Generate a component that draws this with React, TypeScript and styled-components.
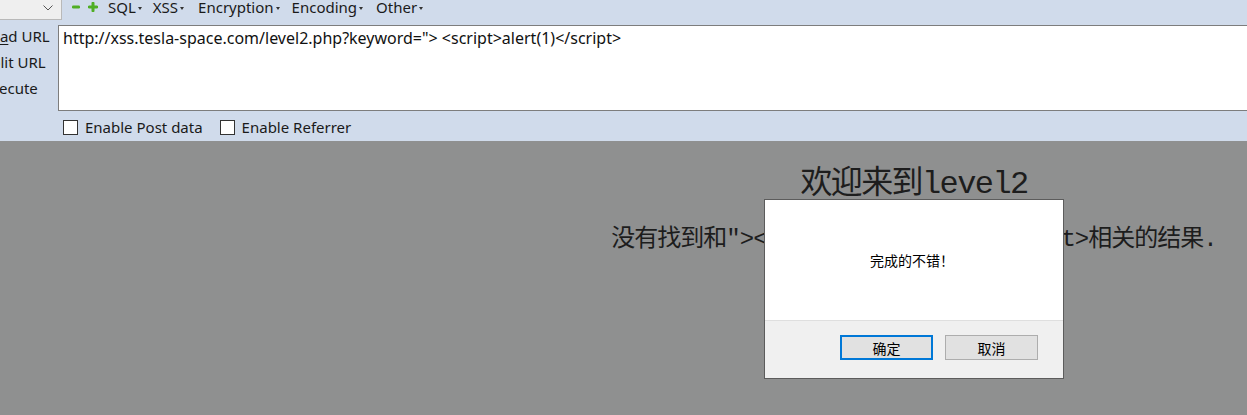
import React from "react";
import styled, { createGlobalStyle } from "styled-components";

const GlobalStyle = createGlobalStyle`
  html, body {
    margin: 0;
    padding: 0;
    width: 1247px;
    height: 415px;
    overflow: hidden;
    background: #8f9090;
  }
  * { box-sizing: border-box; }
`;

const Page = styled.div`
  position: relative;
  width: 1247px;
  height: 415px;
  overflow: hidden;
  background: #8f9090;
`;

const HackBar = styled.div`
  background: #d0dbeb;
  height: 141px;
  font-family: "Noto Sans", "Open Sans", sans-serif;
  font-size: 15px;
  color: #1a1a1a;
`;

const TopRow = styled.div`
  display: flex;
  align-items: flex-start;
  height: 25px;
`;

const Select = styled.div`
  width: 62px;
  height: 20px;
  background: #efefef;
  border-right: 1px solid #b9b9b9;
  border-bottom: 1px solid #b9b9b9;
  display: flex;
  justify-content: flex-end;
  align-items: flex-start;
  padding: 5px 8px 0 0;
`;

const IconBox = styled.span<{ $ml: number }>`
  display: inline-flex;
  width: 10px;
  height: 10px;
  margin-top: 2px;
  margin-left: ${(p) => p.$ml}px;
`;

const Menu = styled.span<{ $ml: number }>`
  display: inline-flex;
  align-items: center;
  margin-left: ${(p) => p.$ml}px;
  line-height: 15px;
  white-space: nowrap;
`;

const Caret = styled.span`
  display: inline-block;
  width: 0;
  height: 0;
  margin-left: 2px;
  margin-top: 1px;
  border-left: 2px solid transparent;
  border-right: 2px solid transparent;
  border-top: 3px solid #333;
`;

const Body = styled.div`
  display: flex;
  height: 86px;
`;

const Side = styled.div`
  display: flex;
  flex-direction: column;
  width: 75px;
  margin-left: -17px;
  margin-top: -2px;
  flex-shrink: 0;
`;

const SideButton = styled.div`
  height: 26px;
  line-height: 26px;
  white-space: nowrap;
  u { text-decoration: underline; text-underline-offset: 2px; }
`;

const UrlBox = styled.div`
  flex: 1;
  margin-right: -4px;
  background: #ffffff;
  border: 1px solid #7d7d7d;
  padding: 2px 4px;
  line-height: 20px;
  font-size: 16px;
  color: #111;
  white-space: nowrap;
`;

const Options = styled.div`
  display: flex;
  align-items: flex-start;
  padding: 8px 0 0 63px;
  height: 30px;
`;

const CheckItem = styled.label<{ $mr: number }>`
  display: inline-flex;
  align-items: center;
  margin-right: ${(p) => p.$mr}px;
  height: 16px;
  white-space: nowrap;
`;

const CheckBox = styled.span`
  width: 15px;
  height: 15px;
  border: 1px solid #333;
  background: #fff;
  margin-right: 7px;
`;

const Content = styled.div`
  width: 1828px;
  text-align: center;
  color: #1d1d1d;
  font-family: "Liberation Mono", "Noto Sans CJK SC", monospace;
`;

const Title = styled.h1`
  margin: 24px 0 0;
  font-size: 32px;
  line-height: 40px;
  font-weight: 400;
  letter-spacing: -1.6px;
`;

const Result = styled.h2`
  margin: 20px 0 0;
  font-size: 24px;
  line-height: 30px;
  font-weight: 400;
  letter-spacing: -1px;
`;

const Dialog = styled.div`
  position: absolute;
  left: 764px;
  top: 199px;
  width: 300px;
  height: 180px;
  border: 1px solid #5c5c5c;
  background: #ffffff;
  display: flex;
  flex-direction: column;
  font-family: "Noto Sans CJK SC", "Noto Sans", sans-serif;
  font-size: 14px;
  color: #000;
`;

const DialogBody = styled.div`
  height: 120px;
  display: flex;
  align-items: center;
  justify-content: center;
  padding-right: 4px;
`;

const DialogFooter = styled.div`
  flex: 1;
  background: #f0f0f0;
  border-top: 1px solid #dfdfdf;
  display: flex;
  justify-content: flex-end;
  align-items: flex-start;
  padding: 14px 25px 0 0;
  gap: 12px;
`;

const DlgButton = styled.div<{ $primary?: boolean }>`
  width: 93px;
  height: 25px;
  display: flex;
  align-items: center;
  justify-content: center;
  background: #e1e1e1;
  border: ${(p) => (p.$primary ? "2px solid #0078d7" : "1px solid #adadad")};
  font-size: 14px;
  line-height: 1;
`;

const Minus = () => (
  <svg width="10" height="10" viewBox="0 0 10 10">
    <rect x="1" y="3.5" width="8" height="3" rx="1.2" fill="#4fae25" />
  </svg>
);

const Plus = () => (
  <svg width="10" height="10" viewBox="0 0 10 10">
    <path d="M5 1.2 V8.8 M1.2 5 H8.8" stroke="#4fae25" strokeWidth="3" strokeLinecap="round" />
  </svg>
);

const Chevron = () => (
  <svg width="10" height="6" viewBox="0 0 10 6">
    <polyline points="0.5,0.5 5,5 9.5,0.5" fill="none" stroke="#555" strokeWidth="1" />
  </svg>
);

export default function App() {
  return (
    <Page>
      <GlobalStyle />
      <HackBar>
        <TopRow>
          <Select>
            <Chevron />
          </Select>
          <IconBox $ml={9}>
            <Minus />
          </IconBox>
          <IconBox $ml={7}>
            <Plus />
          </IconBox>
          <Menu $ml={10}>
            SQL<Caret />
          </Menu>
          <Menu $ml={11}>
            XSS<Caret />
          </Menu>
          <Menu $ml={14}>
            Encryption<Caret />
          </Menu>
          <Menu $ml={12}>
            Encoding<Caret />
          </Menu>
          <Menu $ml={13}>
            Other<Caret />
          </Menu>
        </TopRow>
        <Body>
          <Side>
            <SideButton>
              Lo<u>a</u>d URL
            </SideButton>
            <SideButton>Split URL</SideButton>
            <SideButton>Execute</SideButton>
          </Side>
          <UrlBox>
            http://xss.tesla-space.com/level2.php?keyword="&gt; &lt;script&gt;alert(1)&lt;/script&gt;
          </UrlBox>
        </Body>
        <Options>
          <CheckItem $mr={17}>
            <CheckBox />
            Enable Post data
          </CheckItem>
          <CheckItem $mr={0}>
            <CheckBox />
            Enable Referrer
          </CheckItem>
        </Options>
      </HackBar>
      <Content>
        <Title>欢迎来到level2</Title>
        <Result>没有找到和"&gt;&lt;script&gt;alert(1)&lt;/script&gt;相关的结果.</Result>
      </Content>
      <Dialog>
        <DialogBody>完成的不错！</DialogBody>
        <DialogFooter>
          <DlgButton $primary>确定</DlgButton>
          <DlgButton>取消</DlgButton>
        </DialogFooter>
      </Dialog>
    </Page>
  );
}
